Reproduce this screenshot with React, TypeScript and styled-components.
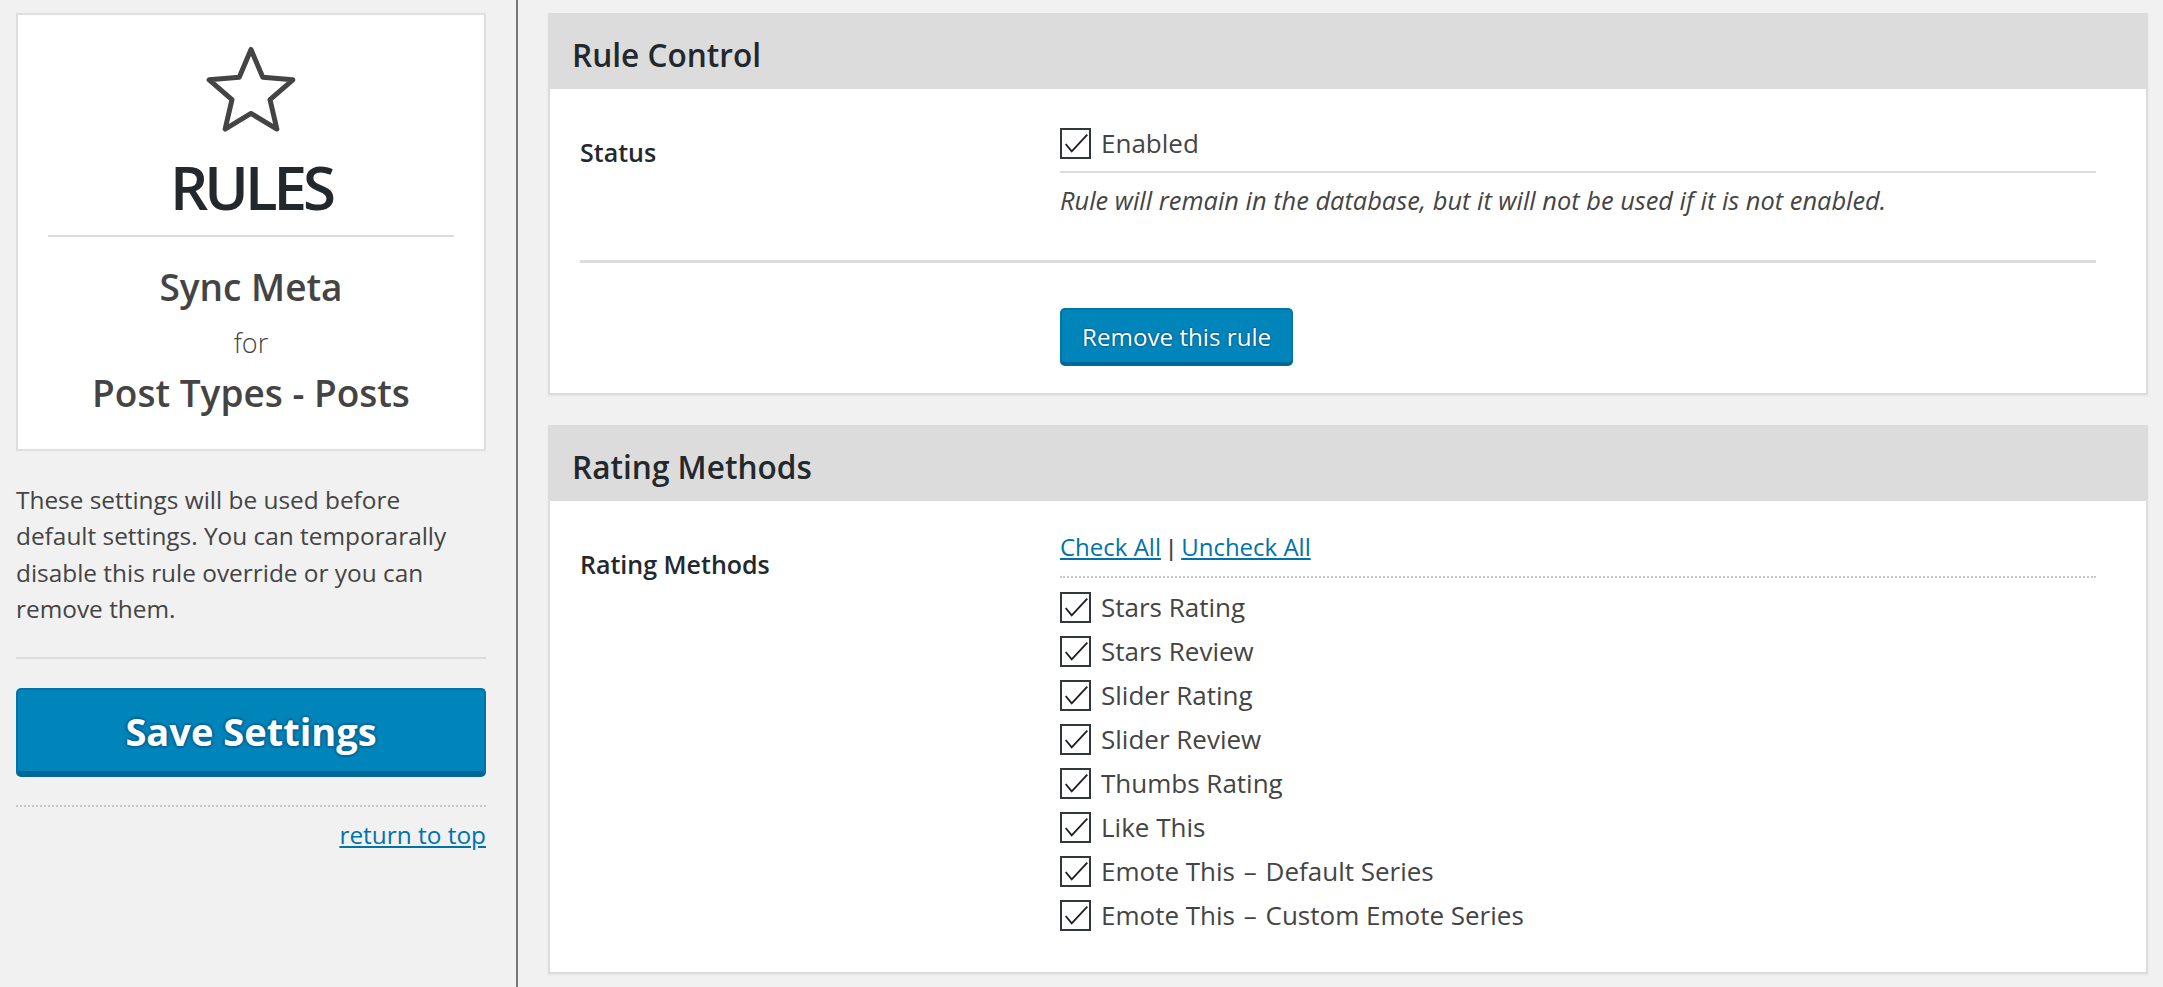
import styled, { createGlobalStyle } from "styled-components";

const GlobalStyle = createGlobalStyle`
  html, body {
    margin: 0;
    padding: 0;
    height: 100%;
    overflow: hidden;
    background: #f1f1f1;
  }
  body {
    font-family: "Open Sans", "Noto Sans", sans-serif;
    color: #444;
  }
  #root {
    height: 100%;
  }
`;

const Page = styled.div`
  display: flex;
  height: 100vh;
`;

const Sidebar = styled.aside`
  flex: none;
  width: 470px;
  margin: 13px 0 0 16px;
  display: flex;
  flex-direction: column;
`;

const RuleCard = styled.div`
  background: #fff;
  border: 2px solid #dfdfdf;
  padding: 30px 0 32px;
  display: flex;
  flex-direction: column;
  align-items: center;
  text-align: center;
`;

const RulesTitle = styled.h1`
  margin: 24px 0 0;
  font-size: 60px;
  line-height: 60px;
  font-weight: 600;
  letter-spacing: -4px;
  color: #23282d;
`;

const CardDivider = styled.div`
  align-self: stretch;
  height: 2px;
  margin: 18px 30px 0;
  background: #dcdcdc;
`;

const CardLine = styled.div<{ $light?: boolean; $gap: number }>`
  margin-top: ${(p) => p.$gap}px;
  font-size: ${(p) => (p.$light ? "27px" : "37px")};
  font-weight: ${(p) => (p.$light ? 300 : 600)};
  line-height: 48px;
  color: #444;
`;

const SidebarNote = styled.p`
  margin: 31px 0 0;
  max-width: 452px;
  font-size: 24.4px;
  line-height: 36.3px;
  color: #444;
`;

const SidebarRule = styled.div`
  height: 2px;
  margin-top: 30px;
  background: #dcdcdc;
`;

const SaveButton = styled.button`
  margin-top: 29px;
  height: 87px;
  border: 2px solid #0073aa;
  border-bottom: 4px solid #006799;
  border-radius: 5px;
  background: #0085ba;
  box-shadow: 0 2px 0 #006799;
  color: #fff;
  font-family: inherit;
  font-size: 38px;
  font-weight: 700;
  text-shadow: 0 -2px 2px #006799, 2px 0 2px #006799, 0 2px 2px #006799,
    -2px 0 2px #006799;
  cursor: pointer;
`;

const DottedRule = styled.div<{ $gap: number }>`
  margin-top: ${(p) => p.$gap}px;
  border-top: 2px dotted #c8c8c8;
`;

const ReturnLink = styled.a`
  align-self: flex-end;
  margin-top: 10px;
  font-size: 24.4px;
  line-height: 36px;
  color: #0073aa;
  text-decoration: underline;
`;

const VerticalRule = styled.div`
  flex: none;
  width: 2px;
  margin-left: 30px;
  background: #787878;
`;

const Main = styled.main`
  flex: 1;
  padding: 13px 15px 0 30px;
  display: flex;
  flex-direction: column;
  gap: 30px;
`;

const Panel = styled.section`
  background: #fff;
  border: 2px solid #dcdcdc;
  box-shadow: 0 1px 2px rgba(0, 0, 0, 0.05);
`;

const PanelHeader = styled.h2`
  margin: 0;
  height: 74px;
  box-sizing: border-box;
  padding: 5px 0 0 22px;
  display: flex;
  align-items: center;
  background: #dcdcdc;
  font-size: 31.6px;
  font-weight: 600;
  color: #23282d;
`;

const PanelBody = styled.div`
  padding: 0 50px 0 30px;
`;

const FormRow = styled.div<{ $pb: number }>`
  display: grid;
  grid-template-columns: 480px 1fr;
  padding-bottom: ${(p) => p.$pb}px;
`;

const RowLabel = styled.div`
  padding-top: 45px;
  font-size: 25px;
  font-weight: 600;
  line-height: 36px;
  color: #23282d;
`;

const RowField = styled.div<{ $pt: number }>`
  padding-top: ${(p) => p.$pt}px;
`;

const RowDivider = styled.div`
  height: 3px;
  background: #dddddd;
`;

const FieldRule = styled.div`
  height: 2px;
  margin-top: 6px;
  background: #dddddd;
`;

const Description = styled.p`
  margin: 9px 0 0;
  font-size: 25.4px;
  font-style: italic;
  line-height: 36px;
  color: #444;
`;

const CheckRow = styled.label`
  display: flex;
  align-items: center;
  gap: 10px;
  height: 44px;
  font-size: 26px;
  color: #444;
`;

const Box = styled.span`
  flex: none;
  width: 31px;
  height: 31px;
  box-sizing: border-box;
  border: 2px solid #32373c;
  background: #fff;
  display: flex;
`;

const RemoveButton = styled.button`
  height: 56px;
  padding: 0 20px;
  border: 2px solid #0073aa;
  border-bottom-color: #006799;
  border-radius: 5px;
  background: #0085ba;
  box-shadow: 0 2px 0 #006799;
  color: #fff;
  font-family: inherit;
  font-size: 24.2px;
  text-shadow: 0 -1px 1px #006799, 1px 0 1px #006799, 0 1px 1px #006799,
    -1px 0 1px #006799;
  cursor: pointer;
`;

const LinkLine = styled.div`
  font-size: 24px;
  line-height: 36px;
  color: #444;
`;

const TextLink = styled.a`
  color: #0073aa;
  text-decoration: underline;
`;

const Sep = styled.span`
  margin: 0 7px;
  font-family: "Liberation Sans", sans-serif;
`;

const CheckList = styled.div`
  margin-top: 7px;
  display: flex;
  flex-direction: column;
`;

const Dash = styled.span`
  margin: 0 2px;
`;

const Star = () => (
  <svg width="92" height="88" viewBox="0 0 92 88" fill="none">
    <polygon
      points="46,4.45 57.76,32.27 87.85,34.85 65.02,54.63 71.86,84.05 46,68.45 20.14,84.05 26.98,54.63 4.15,34.85 34.24,32.27"
      stroke="#444"
      strokeWidth="5"
      strokeLinejoin="round"
    />
  </svg>
);

const Check = ({ label }: { label: string }) => {
  const [head, tail] = label.split(" – ");
  return (
    <CheckRow>
      <Box>
        <svg width="27" height="27" viewBox="0 0 27 27">
          <polyline
            points="3.7,14 9.7,21.4 25.3,4.7"
            fill="none"
            stroke="#1e1e1e"
            strokeWidth="1.8"
          />
        </svg>
      </Box>
      <span>
        {head}
        {tail && (
          <>
            {" "}
            <Dash>–</Dash> {tail}
          </>
        )}
      </span>
    </CheckRow>
  );
};

const methods = [
  "Stars Rating",
  "Stars Review",
  "Slider Rating",
  "Slider Review",
  "Thumbs Rating",
  "Like This",
  "Emote This – Default Series",
  "Emote This – Custom Emote Series",
];

export default function App() {
  return (
    <>
      <GlobalStyle />
      <Page>
        <Sidebar>
          <RuleCard>
            <Star />
            <RulesTitle>RULES</RulesTitle>
            <CardDivider />
            <CardLine $gap={26}>Sync Meta</CardLine>
            <CardLine $gap={8} $light>
              for
            </CardLine>
            <CardLine $gap={2}>Post Types - Posts</CardLine>
          </RuleCard>
          <SidebarNote>
            These settings will be used before default settings. You can
            temporarally disable this rule override or you can remove them.
          </SidebarNote>
          <SidebarRule />
          <SaveButton>Save Settings</SaveButton>
          <DottedRule $gap={30} />
          <ReturnLink href="#top">return to top</ReturnLink>
        </Sidebar>
        <VerticalRule />
        <Main>
          <Panel>
            <PanelHeader>Rule Control</PanelHeader>
            <PanelBody>
              <FormRow $pb={42}>
                <RowLabel>Status</RowLabel>
                <RowField $pt={32}>
                  <Check label="Enabled" />
                  <FieldRule />
                  <Description>
                    Rule will remain in the database, but it will not be used if
                    it is not enabled.
                  </Description>
                </RowField>
              </FormRow>
              <RowDivider />
              <FormRow $pb={29}>
                <RowLabel />
                <RowField $pt={45}>
                  <RemoveButton>Remove this rule</RemoveButton>
                </RowField>
              </FormRow>
            </PanelBody>
          </Panel>
          <Panel>
            <PanelHeader>Rating Methods</PanelHeader>
            <PanelBody>
              <FormRow $pb={35}>
                <RowLabel>Rating Methods</RowLabel>
                <RowField $pt={28}>
                  <LinkLine>
                    <TextLink href="#check">Check All</TextLink>
                    <Sep>|</Sep>
                    <TextLink href="#uncheck">Uncheck All</TextLink>
                  </LinkLine>
                  <DottedRule $gap={10} />
                  <CheckList>
                    {methods.map((m) => (
                      <Check key={m} label={m} />
                    ))}
                  </CheckList>
                </RowField>
              </FormRow>
            </PanelBody>
          </Panel>
        </Main>
      </Page>
    </>
  );
}
